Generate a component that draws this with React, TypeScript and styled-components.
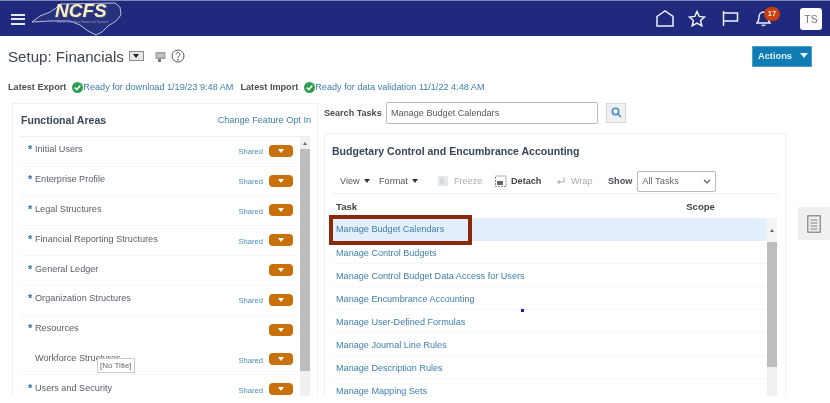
import React from "react";
import styled, { createGlobalStyle } from "styled-components";

const Global = createGlobalStyle`
  html, body { margin: 0; padding: 0; background: #fff; }
  body { font-family: "Liberation Sans", Arial, sans-serif; color: #333; }
  * { box-sizing: border-box; }
`;

const Page = styled.div`
  position: relative;
  width: 830px;
  height: 403px;
  overflow: hidden;
  background: #fff;
  filter: blur(0.4px);
`;

const Header = styled.header`
  height: 36px;
  background: #1f2a7e;
  border-top: 1px solid #8088b4;
  display: flex;
  align-items: center;
  padding: 0 8px 0 11px;
`;

const Burger = styled.div`
  width: 14px;
  height: 11px;
  margin-top: 1px;
  display: flex;
  flex-direction: column;
  justify-content: space-between;
  span { display: block; height: 2px; background: #e6e8f2; }
`;

const Logo = styled.div`
  position: relative;
  width: 94px;
  height: 35px;
  margin-left: 5px;
  flex: none;
  svg { position: absolute; left: 0; top: 0; }
`;

const LogoText = styled.span`
  position: absolute;
  left: 25px;
  top: 1px;
  font: italic bold 19px/18px "Liberation Sans", sans-serif;
  color: #f6eecb;
  text-shadow: 1px 1px 0 #4a4a66;
`;

const LogoSub = styled.span`
  position: absolute;
  left: 27px;
  top: 19px;
  font: 3.6px "Liberation Sans", sans-serif;
  color: #8f96bf;
  white-space: nowrap;
`;

const HeaderIcons = styled.div`
  margin-left: auto;
  display: flex;
  align-items: center;
`;

const HeaderIcon = styled.div<{ $mr: number }>`
  position: relative;
  width: 20px;
  height: 20px;
  margin-right: ${(p) => p.$mr}px;
  display: flex;
  align-items: center;
  justify-content: center;
`;

const Badge = styled.span`
  position: absolute;
  left: 11px;
  top: -2px;
  width: 16px;
  height: 14px;
  border-radius: 7px;
  background: #c8400f;
  color: #fbe6d8;
  font-size: 7.5px;
  font-weight: 700;
  line-height: 14px;
  text-align: center;
`;

const Avatar = styled.div`
  width: 22px;
  height: 22px;
  border-radius: 3px;
  background: #fff;
  color: #777;
  font-size: 10.5px;
  line-height: 22px;
  text-align: center;
`;

const TitleRow = styled.div`
  height: 40px;
  display: flex;
  align-items: center;
  padding: 0 18px 0 8px;
`;

const Title = styled.h1`
  margin: 0;
  font-size: 15.1px;
  font-weight: 400;
  color: #3f4650;
  white-space: nowrap;
`;

const TitleMenu = styled.span`
  width: 15px;
  height: 10px;
  margin-left: 5px;
  border: 1px solid #8a8a8a;
  background: #e8e8e8;
  display: flex;
  align-items: center;
  justify-content: center;
  &::after {
    content: "";
    border-left: 3px solid transparent;
    border-right: 3px solid transparent;
    border-top: 4px solid #222;
  }
`;

const TitleIcons = styled.div`
  display: flex;
  align-items: center;
  gap: 5px;
  margin-left: 11px;
`;

const ActionsButton = styled.button`
  margin-left: auto;
  width: 60px;
  height: 21px;
  padding: 0 0 1px 2px;
  border: 1px solid #4ba0c8;
  background: #0f7db3;
  color: #e8f2f8;
  font: 700 9.3px "Liberation Sans", sans-serif;
  display: flex;
  align-items: center;
  justify-content: center;
  gap: 8px;
  &::after {
    content: "";
    border-left: 4px solid transparent;
    border-right: 4px solid transparent;
    border-top: 5px solid #e8f2f8;
  }
`;

const StatusRow = styled.div`
  height: 22px;
  padding: 0 0 0 8px;
  display: flex;
  align-items: center;
  font-size: 9.15px;
  white-space: nowrap;
`;

const StatusLabel = styled.b`
  color: #4a4f55;
  margin-right: 6px;
`;

const StatusText = styled.span`
  color: #3f7fab;
  margin: 0 7px 0 0;
`;

const Columns = styled.div`
  display: grid;
  grid-template-columns: 306px 1fr;
  gap: 6px;
  padding: 4px 0 0 12px;
  height: 299px;
`;

const LeftPanel = styled.section`
  margin-top: 1px;
  border: 1px solid #f0f0f0;
  border-bottom: none;
  padding: 0 7px 0 8px;
  display: flex;
  flex-direction: column;
  height: 293px;
  overflow: hidden;
`;

const LeftHead = styled.div`
  height: 33px;
  flex: none;
  display: flex;
  align-items: center;
  justify-content: space-between;
  border-bottom: 1px solid #eeeeee;
`;

const PanelTitle = styled.h2`
  margin: 0;
  font-size: 10.55px;
  font-weight: 700;
  color: #3b4654;
`;

const HeadLink = styled.a`
  font-size: 9.15px;
  color: #3f7fa3;
  margin-right: -1px;
`;

const ListWrap = styled.div`
  display: grid;
  grid-template-columns: 1fr 10px;
  flex: 1;
  min-height: 0;
`;

const AreaList = styled.div`
  min-width: 0;
`;

const AreaRow = styled.div<{ $plain?: boolean }>`
  height: 29.8px;
  display: flex;
  align-items: center;
  padding: 0 7px 0 7px;
  border-bottom: 1px solid ${(p) => (p.$plain ? "transparent" : "#f5f5f5")};
`;

const Star = styled.span`
  width: 7px;
  flex: none;
  margin-top: -4px;
  color: #2f6ea5;
  font-size: 11px;
  font-weight: 700;
`;

const AreaName = styled.span`
  font-size: 9.15px;
  color: #5a6068;
  margin-top: -4px;
`;

const SharedTag = styled.span`
  margin-left: auto;
  margin-top: 1px;
  font-size: 7.6px;
  color: #4d8db5;
`;

const Reveal = styled.button<{ $alone?: boolean }>`
  width: 24px;
  height: 12px;
  margin-top: -1px;
  margin-left: ${(p) => (p.$alone ? "auto" : "6px")};
  padding: 0;
  border: none;
  border-radius: 4px;
  background: #c8710a;
  display: flex;
  align-items: center;
  justify-content: center;
  &::after {
    content: "";
    border-left: 3.5px solid transparent;
    border-right: 3.5px solid transparent;
    border-top: 4px solid #fff;
  }
`;

const ScrollTrack = styled.div`
  background: #f0f0f0;
  display: flex;
  flex-direction: column;
  align-items: stretch;
`;

const ScrollArrow = styled.div<{ $h: number; $white?: boolean }>`
  height: ${(p) => p.$h}px;
  flex: none;
  display: flex;
  align-items: center;
  justify-content: center;
  background: ${(p) => (p.$white ? "#f4f4f4" : "transparent")};
  &::after {
    content: "";
    border-left: 2.5px solid transparent;
    border-right: 2.5px solid transparent;
    border-bottom: 3px solid #666;
  }
`;

const ScrollThumb = styled.div<{ $h: number }>`
  height: ${(p) => p.$h}px;
  flex: none;
  background: #bdbdbd;
`;

const RightColumn = styled.div`
  display: flex;
  flex-direction: column;
  height: 294px;
`;

const SearchRow = styled.div`
  height: 21px;
  flex: none;
  display: flex;
  align-items: center;
  margin-bottom: 10px;
`;

const SearchLabel = styled.label`
  font-size: 9.05px;
  font-weight: 700;
  color: #4a4f55;
  width: 62px;
`;

const SearchInput = styled.div`
  width: 212px;
  height: 22px;
  border: 1px solid #b8bcc0;
  border-radius: 2px;
  padding: 0 4px;
  font-size: 9.1px;
  line-height: 20px;
  color: #555;
`;

const SearchButton = styled.div`
  width: 20px;
  height: 20px;
  margin-left: 8px;
  border: 1px solid #d4d8dc;
  background: #eef0f2;
  display: flex;
  align-items: center;
  justify-content: center;
`;

const RightRow = styled.div`
  display: flex;
  flex: 1;
  min-height: 0;
`;

const TaskPanel = styled.section`
  width: 462px;
  border: 1px solid #f0f0f0;
  border-bottom: none;
  padding: 0 7px;
  display: flex;
  flex-direction: column;
`;

const TaskTitle = styled(PanelTitle)`
  height: 34px;
  line-height: 35px;
  flex: none;
`;

const Toolbar = styled.div`
  height: 26px;
  flex: none;
  display: flex;
  align-items: center;
  border-bottom: 1px solid #eeeeee;
  padding-left: 8px;
  font-size: 9.15px;
  color: #555;
`;

const ToolMenu = styled.span<{ $w: number }>`
  width: ${(p) => p.$w}px;
  display: flex;
  align-items: center;
  gap: 4px;
  &::after {
    content: "";
    border-left: 3.5px solid transparent;
    border-right: 3.5px solid transparent;
    border-top: 4px solid #333;
  }
`;

const ToolItem = styled.span<{ $off?: boolean; $w: number; $gap: number }>`
  width: ${(p) => p.$w}px;
  display: flex;
  align-items: center;
  gap: ${(p) => p.$gap}px;
  font-weight: ${(p) => (p.$off ? 400 : 700)};
  color: ${(p) => (p.$off ? "#a8adb2" : "#444")};
`;

const ShowLabel = styled.b`
  color: #4a4f55;
  margin-right: 5px;
`;

const ShowSelect = styled.div`
  width: 79px;
  height: 21px;
  margin-top: 1px;
  border: 1px solid #b8bcc0;
  border-radius: 2px;
  padding: 0 4px;
  display: flex;
  align-items: center;
  justify-content: space-between;
  font-size: 9.3px;
  color: #666;
`;

const TableHead = styled.div`
  height: 24px;
  flex: none;
  display: flex;
  align-items: center;
  padding-left: 4px;
  font-size: 9.6px;
  font-weight: 700;
  color: #444;
`;

const ScopeHead = styled.span`
  margin-left: 329px;
`;

const TableWrap = styled.div`
  display: grid;
  grid-template-columns: 435px 10px;
  flex: 1;
  min-height: 0;
  overflow: hidden;
`;

const TaskList = styled.div`
  min-width: 0;
`;

const TaskRow = styled.div<{ $active?: boolean }>`
  height: 23px;
  padding: ${(p) => (p.$active ? "0 4px" : "1px 4px 0")};
  display: flex;
  align-items: center;
  font-size: 9.1px;
  color: #3f7fab;
  background: ${(p) => (p.$active ? "#e3effb" : "#fff")};
  border-bottom: 1px solid ${(p) => (p.$active ? "#e3effb" : "#f7f7f7")};
`;

const SideTab = styled.div`
  width: 32px;
  height: 33px;
  margin: 74px 0 0 12px;
  flex: none;
  background: #f0f0f0;
  display: flex;
  align-items: center;
  justify-content: center;
`;

const Highlight = styled.div`
  position: absolute;
  left: 329px;
  top: 215px;
  width: 143px;
  height: 30px;
  border: 4px solid #8a2a0c;
  pointer-events: none;
`;

const TooltipBox = styled.div`
  position: absolute;
  left: 97px;
  top: 358px;
  height: 15px;
  padding: 0 2px;
  background: #fff;
  border: 1px solid #c8c8c8;
  font-size: 8px;
  line-height: 13px;
  color: #666;
`;

const CursorDot = styled.div`
  position: absolute;
  left: 521px;
  top: 309px;
  width: 3px;
  height: 3px;
  background: #1a1ac0;
`;

const ToolIcon = styled.svg`
  flex: none;
  display: block;
`;

const areas: { name: string; star: boolean; shared: boolean }[] = [
  { name: "Initial Users", star: true, shared: true },
  { name: "Enterprise Profile", star: true, shared: true },
  { name: "Legal Structures", star: true, shared: true },
  { name: "Financial Reporting Structures", star: true, shared: true },
  { name: "General Ledger", star: true, shared: false },
  { name: "Organization Structures", star: true, shared: true },
  { name: "Resources", star: true, shared: false },
  { name: "Workforce Structures", star: false, shared: true },
  { name: "Users and Security", star: true, shared: true },
];

const tasks = [
  "Manage Budget Calendars",
  "Manage Control Budgets",
  "Manage Control Budget Data Access for Users",
  "Manage Encumbrance Accounting",
  "Manage User-Defined Formulas",
  "Manage Journal Line Rules",
  "Manage Description Rules",
  "Manage Mapping Sets",
];

const CheckIcon = () => (
  <ToolIcon width="11" height="11" viewBox="0 0 11 11">
    <circle cx="5.5" cy="5.5" r="5.5" fill="#2e9e4f" />
    <path d="M2.8 5.6 L4.8 7.6 L8.3 3.6" fill="none" stroke="#fff" strokeWidth="1.5" />
  </ToolIcon>
);

export default function App() {
  return (
    <Page>
      <Global />
      <Header>
        <Burger>
          <span />
          <span />
          <span />
        </Burger>
        <Logo>
          <svg width="94" height="35" viewBox="0 0 94 35">
            <path
              d="M2 21 L10 15 L20 11 L26 7 L30 3 L85 2 L90 6 L91 14 L86 20 L78 25 L72 31 L66 34 L58 30 L50 24 L40 20 L20 20 Z"
              fill="#27327f"
              stroke="#b8bed8"
              strokeWidth="1"
            />
          </svg>
          <LogoText>NCFS</LogoText>
          <LogoSub>North Carolina Financial System</LogoSub>
        </Logo>
        <HeaderIcons>
          <HeaderIcon $mr={12}>
            <svg width="18" height="17" viewBox="0 0 18 17" fill="none" stroke="#eef0f6" strokeWidth="1.5">
              <path d="M1 6.5 L9 1 L17 6.5 V16 H1 Z" />
            </svg>
          </HeaderIcon>
          <HeaderIcon $mr={13}>
            <svg width="18" height="17" viewBox="0 0 18 17" fill="none" stroke="#eef0f6" strokeWidth="1.5">
              <path d="M9 1.5 L11.2 6.4 L16.6 7 L12.6 10.5 L13.8 15.8 L9 13 L4.2 15.8 L5.4 10.5 L1.4 7 L6.8 6.4 Z" />
            </svg>
          </HeaderIcon>
          <HeaderIcon $mr={13}>
            <svg width="17" height="17" viewBox="0 0 17 17" fill="none" stroke="#eef0f6" strokeWidth="1.5">
              <path d="M1.5 1 V16 M1.5 3 H15.5 V11 H1.5" />
            </svg>
          </HeaderIcon>
          <HeaderIcon $mr={27}>
            <svg width="15" height="17" viewBox="0 0 15 17" fill="none" stroke="#eef0f6" strokeWidth="1.4">
              <path d="M1 13 C3 11 3 9 3 7 C3 4 5 2 7.5 2 C10 2 12 4 12 7 C12 9 12 11 14 13 Z" />
              <path d="M6 14.5 C6 16 9 16 9 14.5" />
            </svg>
            <Badge>17</Badge>
          </HeaderIcon>
          <Avatar>TS</Avatar>
        </HeaderIcons>
      </Header>

      <TitleRow>
        <Title>Setup: Financials</Title>
        <TitleMenu />
        <TitleIcons>
          <svg width="11" height="11" viewBox="0 0 11 11">
            <rect x="0.5" y="1" width="10" height="7" fill="#a4a4a4" />
            <rect x="2" y="3" width="7" height="3" fill="#c4c4c4" />
            <rect x="3" y="8" width="3" height="3" fill="#777" />
          </svg>
          <svg width="14" height="14" viewBox="0 0 14 14" fill="none" stroke="#555" strokeWidth="1">
            <circle cx="7" cy="7" r="6" />
            <path d="M5 5.4 C5 3 9 3 9 5.4 C9 7 7 7 7 8.8" />
            <circle cx="7" cy="10.6" r="0.5" fill="#555" />
          </svg>
        </TitleIcons>
        <ActionsButton>Actions</ActionsButton>
      </TitleRow>

      <StatusRow>
        <StatusLabel>Latest Export</StatusLabel>
        <CheckIcon />
        <StatusText>Ready for download 1/19/23 9:48 AM</StatusText>
        <StatusLabel>Latest Import</StatusLabel>
        <CheckIcon />
        <StatusText>Ready for data validation 11/1/22 4:48 AM</StatusText>
      </StatusRow>

      <Columns>
        <LeftPanel>
          <LeftHead>
            <PanelTitle>Functional Areas</PanelTitle>
            <HeadLink>Change Feature Opt In</HeadLink>
          </LeftHead>
          <ListWrap>
            <AreaList>
              {areas.map((a) => (
                <AreaRow key={a.name} $plain={a.name === "Resources"}>
                  <Star>{a.star ? "*" : ""}</Star>
                  <AreaName>{a.name}</AreaName>
                  {a.shared && <SharedTag>Shared</SharedTag>}
                  <Reveal $alone={!a.shared} />
                </AreaRow>
              ))}
            </AreaList>
            <ScrollTrack>
              <ScrollArrow $h={12} />
              <ScrollThumb $h={222} />
            </ScrollTrack>
          </ListWrap>
        </LeftPanel>

        <RightColumn>
          <SearchRow>
            <SearchLabel>Search Tasks</SearchLabel>
            <SearchInput>Manage Budget Calendars</SearchInput>
            <SearchButton>
              <svg width="11" height="11" viewBox="0 0 11 11" fill="none" stroke="#4a8fc0" strokeWidth="1.6">
                <circle cx="4.5" cy="4.5" r="3.2" />
                <path d="M7 7 L10 10" />
              </svg>
            </SearchButton>
          </SearchRow>
          <RightRow>
            <TaskPanel>
              <TaskTitle>Budgetary Control and Encumbrance Accounting</TaskTitle>
              <Toolbar>
                <ToolMenu $w={39}>View</ToolMenu>
                <ToolMenu $w={59}>Format</ToolMenu>
                <ToolItem $off $w={57} $gap={6}>
                  <ToolIcon width="10" height="10" viewBox="0 0 10 10">
                    <rect width="10" height="10" fill="#e4e6e8" />
                    <path d="M3 2 V8 M5 2 V8" stroke="#c8ccd0" />
                  </ToolIcon>
                  Freeze
                </ToolItem>
                <ToolItem $w={61} $gap={4}>
                  <ToolIcon width="12" height="12" viewBox="0 0 12 12">
                    <rect x="0.5" y="1" width="10.5" height="10.5" fill="none" stroke="#888" strokeDasharray="2 1" />
                    <rect x="2" y="6" width="6" height="4" fill="#666" />
                  </ToolIcon>
                  Detach
                </ToolItem>
                <ToolItem $off $w={52} $gap={5}>
                  <ToolIcon width="10" height="10" viewBox="0 0 11 10" fill="none" stroke="#b8bcc0" strokeWidth="1.4">
                    <path d="M9 1 V6 H2 M4 4 L2 6 L4 8" />
                  </ToolIcon>
                  Wrap
                </ToolItem>
                <ShowLabel>Show</ShowLabel>
                <ShowSelect>
                  All Tasks
                  <svg width="8" height="5" viewBox="0 0 8 5" fill="none" stroke="#555" strokeWidth="1.2">
                    <path d="M1 1 L4 4 L7 1" />
                  </svg>
                </ShowSelect>
              </Toolbar>
              <TableHead>
                Task
                <ScopeHead>Scope</ScopeHead>
              </TableHead>
              <TableWrap>
                <TaskList>
                  {tasks.map((t, i) => (
                    <TaskRow key={t} $active={i === 0}>
                      {t}
                    </TaskRow>
                  ))}
                </TaskList>
                <ScrollTrack>
                  <ScrollArrow $h={24} $white />
                  <ScrollThumb $h={125} />
                </ScrollTrack>
              </TableWrap>
            </TaskPanel>
            <SideTab>
              <svg width="14" height="18" viewBox="0 0 14 18" fill="none" stroke="#808080" strokeWidth="1.2">
                <rect x="0.8" y="0.8" width="12.4" height="16.4" />
                <path d="M3.5 5 H10.5 M3.5 8 H10.5 M3.5 11 H10.5 M3.5 14 H10.5" />
              </svg>
            </SideTab>
          </RightRow>
        </RightColumn>
      </Columns>

      <Highlight />
      <TooltipBox>[No Title]</TooltipBox>
      <CursorDot />
    </Page>
  );
}
